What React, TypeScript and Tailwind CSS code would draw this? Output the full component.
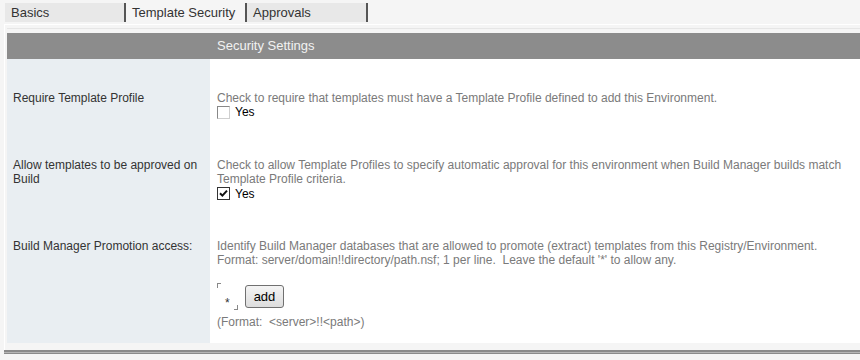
const font = "font-['Liberation_Sans',Arial,sans-serif]";

const Tab = ({ label, active = false }: { label: string; active?: boolean }) => (
  <div
    className={`w-[121px] h-[19px] border-r-2 border-[#555] pl-[6px] text-[13px] leading-[19px] text-[#333] ${
      active ? "bg-[#f5f5f5]" : "bg-[#e8e8e8]"
    }`}
  >
    {label}
  </div>
);

const Checkbox = ({ checked = false }: { checked?: boolean }) => (
  <span
    className={`w-[13px] h-[13px] bg-white border flex items-center justify-center ${
      checked ? "border-[#333]" : "border-t-[#888] border-l-[#888] border-r-[#cfcfcf] border-b-[#cfcfcf]"
    }`}
  >
    {checked && (
      <svg width="9" height="9" viewBox="0 0 9 9">
        <path d="M1 4.2 L3.4 6.6 L8 1.6" fill="none" stroke="#111" strokeWidth="2" />
      </svg>
    )}
  </span>
);

const YesLine = ({ checked = false, h = "h-[14px]" }: { checked?: boolean; h?: string }) => (
  <div className={`flex items-center gap-[5px] ${h}`}>
    <Checkbox checked={checked} />
    <span className="text-black">Yes</span>
  </div>
);

export default function App() {
  return (
    <div className={`min-h-screen bg-[#f5f5f5] pt-[3px] ${font}`}>
      {/* Tabs */}
      <div className="flex pl-[5px]">
        <Tab label="Basics" />
        <Tab label="Template Security" active />
        <Tab label="Approvals" />
      </div>

      <div className="mt-[2px] ml-[4px] border-t border-l border-white pt-[3px] pl-[2px]">
        <div className="border-t border-[#e6e6e6] pt-[4px]">
          {/* Header */}
          <div className="grid grid-cols-[203px_1fr] h-[26px] bg-[#8c8c8c] text-[13px] leading-[26px] text-[#f2f2f2]">
            <div />
            <div className="pl-[7px]">Security Settings</div>
          </div>

          {/* Rows */}
          <div className="grid grid-cols-[203px_1fr] text-[12px] leading-[14px]">
            <div className="bg-[#e9eef2] pl-[6px] pt-[32px] pb-[39px] text-[#333]">
              Require Template Profile
            </div>
            <div className="bg-white pl-[7px] pt-[32px] pb-[39px] text-[#7a7a7a]">
              <div className="whitespace-nowrap">
                Check to require that templates must have a Template Profile defined to add this Environment.
              </div>
              <YesLine />
            </div>

            <div className="bg-[#e9eef2] pl-[6px] pb-[38px] text-[#333]">
              Allow templates to be approved on
              <br />
              Build
            </div>
            <div className="bg-white pl-[7px] pb-[38px] text-[#7a7a7a]">
              <div className="whitespace-nowrap">
                Check to allow Template Profiles to specify automatic approval for this environment when Build Manager builds match
                <br />
                Template Profile criteria.
              </div>
              <YesLine checked h="h-[15px]" />
            </div>

            <div className="bg-[#e9eef2] pl-[6px] pb-[14px] text-[#333]">
              Build Manager Promotion access:
            </div>
            <div className="bg-white pl-[7px] pb-[14px] text-[#7a7a7a]">
              <div className="whitespace-pre">
                {"Identify Build Manager databases that are allowed to promote (extract) templates from this Registry/Environment.\nFormat: server/domain!!directory/path.nsf; 1 per line.  Leave the default '*' to allow any."}
              </div>
              <div className="mt-[16px] flex items-center gap-[7px]">
                <div className="relative w-[21px] h-[27px]">
                  <span className="absolute left-0 top-0 w-[4px] h-[5px] border-t border-l border-[#888]" />
                  <span className="absolute left-[8px] top-[13px] text-[12px] leading-[14px] text-[#333]">*</span>
                  <span className="absolute right-0 bottom-0 w-[4px] h-[5px] border-b border-r border-[#888]" />
                </div>
                <button className="w-[39px] h-[23px] rounded-[3px] border border-[#707070] bg-gradient-to-b from-[#f4f4f4] to-[#dddddd] text-[13px] leading-[20px] text-black">
                  add
                </button>
              </div>
              <div className="mt-[5px] whitespace-pre">{"(Format:  <server>!!<path>)"}</div>
            </div>
          </div>

          <div className="h-[7px]" />
        </div>
      </div>

      {/* Bottom rule */}
      <div className="ml-[4px] h-[4px] border-t-2 border-b border-[#8a8a8a] bg-[#b5b5b5]" />
    </div>
  );
}
